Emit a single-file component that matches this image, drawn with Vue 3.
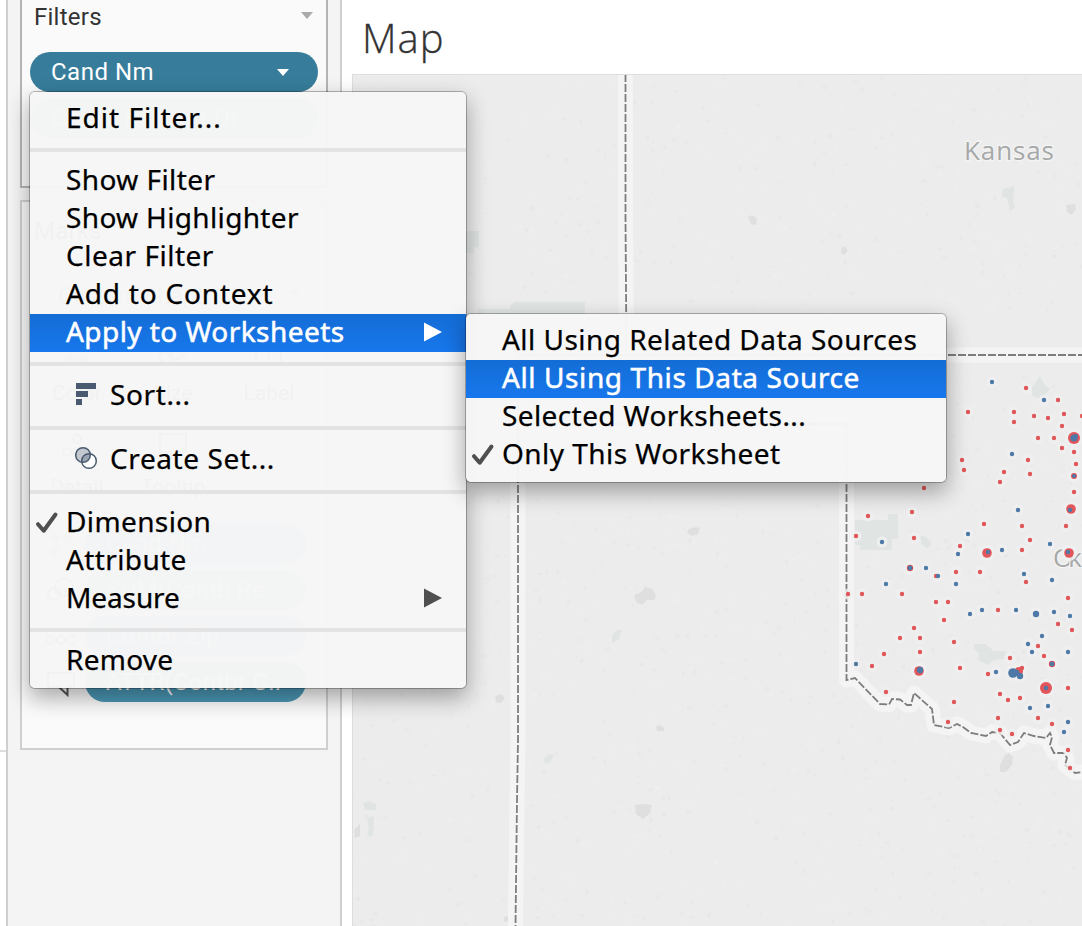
<script setup>
// t: label, s: tracking in px
const menu = [
  { t: 'Edit Filter...', s: 1 },
  null,
  { t: 'Show Filter', s: 0.42 },
  { t: 'Show Highlighter', s: 0.35 },
  { t: 'Clear Filter', s: 0.52 },
  { t: 'Add to Context', s: 0.8 },
  { t: 'Apply to Worksheets', s: 0.44, active: true, arrow: true },
  null,
  { t: 'Sort...', s: 0.6, icon: 'sort' },
  null,
  { t: 'Create Set...', s: 0.6, icon: 'set' },
  null,
  { t: 'Dimension', s: 0.38, check: true },
  { t: 'Attribute', s: 0.38 },
  { t: 'Measure', s: -0.1, arrow: true },
  null,
  { t: 'Remove', s: 0.25 },
]
const submenu = [
  { t: 'All Using Related Data Sources', s: 0.46 },
  { t: 'All Using This Data Source', s: 0.6, active: true },
  { t: 'Selected Worksheets...', s: 0.4 },
  { t: 'Only This Worksheet', s: 0.45, check: true },
]

// x, y and an optional radius for each mark
const red = [
  [1026,388],[1058,400],[968,412],[1014,412],[1014,422],[1034,416],[1048,418],[1064,414],[1082,416],[1062,426],
  [1038,438],[1054,438],[1074,438,6],[1062,448],[1074,452],[1076,464],[1074,476,3],[1074,492],[1028,460],[1030,474],
  [1004,472],[1000,482],[962,460],[964,470],[924,488],[868,516],[912,512],[856,536],[914,538],[984,524],[960,546],
  [987,553,4.8],[1022,526],[1030,540],[1022,550],[1066,526],[1071,509,4.8],[1069,553,4.8],[910,568,3.2],[936,576],
  [956,572],[980,572],[1026,582],[848,594],[862,594],[902,594],[936,602],[948,602],[944,620],[998,610],[1068,598],
  [1058,624],[1072,630],[914,628],[900,638],[920,638],[884,654],[872,666],[920,652],[954,642],[919,671,4.8],
  [960,668],[886,692],[954,702],[948,722],[988,674],[1010,658],[1019,671,4],[1022,668],[1038,646],[1044,656],
  [1052,664,3.2],[1046,688,6],[1068,688],[1000,694],[1008,700],[1020,698],[998,718],[1038,718],[1052,724],
  [1000,730],[1012,734],[1068,750],[1070,768],
]
const blue = [
  [992,382],[1044,400],[1074,438,3.6],[1076,436,2],[1074,476,2],[1012,454],[882,542],[968,534],[958,554],[988,552],[1002,550],
  [1018,510],[1050,544],[1070,510],[1068,552],[910,568,2.4],[926,568],[938,576],[956,584],[1024,574],[1052,580],
  [886,584],[970,614],[982,610],[1016,610],[1036,614,3.2],[1054,612],[1070,616],[1042,636],[856,664],[920,670,3.2],
  [996,672],[1013,673,4.8],[1017,672],[1020,676,3.2],[1028,644],[1032,652],[1052,664,2.4],[1068,652],[1046,688],
  [1048,706],[1030,708],[1068,722],[1064,732],
]

// faint terrain texture
const specks = []
let seed = 7
const rnd = () => (seed = (seed * 16807) % 2147483647) / 2147483647
for (let i = 0; i < 1500; i++) {
  specks.push([352 + rnd() * 730, 76 + rnd() * 850, 1.5 + rnd() * 3, 1.5 + rnd() * 3, rnd() > 0.4 ? '#e6e6e6' : '#f0f0f0'])
}

const borders = [
  'M625.5 74V220L626.5 355M518 355H1082M518 355V740L517 800L515.5 926',
  'M518 424H846.5',
  'M846.5 424V680L855 678L880 704L889 704.500L892 699L900 699.500L907 705L911 705L914 693L932 709L934 725L949 728L957 724L963 727L971 733L986 736L992 732L1000 733L1010 745L1018 742L1024 733L1034 736L1046 738L1050 733L1052 737L1050 745L1054 753L1064 753L1067 758L1065 765L1075 773L1084 772',
]
</script>

<template>
  <div class="screen">
    <aside class="gutter"></aside>
    <section class="shelf">
      <div class="card filters">
        <header class="cardhead"><span>Filters</span><i class="caret"></i></header>
        <div class="pill"><span>Cand Nm</span><i class="caret light"></i></div>
        <div class="pill green"><span>Contb Receipt Dt</span></div>
      </div>
      <div class="card marks">
        <header class="cardhead"><span>Marks</span></header>
        <div class="picker"><span>Custom Shape</span><i class="caret"></i></div>
        <div class="buttons">
          <div><svg width="30" height="28"><circle cx="9" cy="8" r="6"/><circle cx="21" cy="8" r="6"/><circle cx="9" cy="21" r="6"/><circle cx="21" cy="21" r="6"/></svg>Color</div>
          <div><svg width="30" height="28" class="line"><circle cx="18" cy="12" r="9"/><circle cx="8" cy="19" r="6"/></svg>Size</div>
          <div><svg width="30" height="28" class="line"><rect x="2" y="2" width="25" height="24"/><path d="M9 8H20M14.500 8V21"/></svg>Label</div>
          <div><svg width="30" height="28" class="line"><circle cx="15" cy="7" r="4"/><circle cx="5" cy="20" r="4"/><circle cx="15" cy="20" r="4"/><circle cx="25" cy="20" r="4"/></svg>Detail</div>
          <div><svg width="30" height="28" class="line"><path d="M2 2H28V20H17L13 26V20H2Z"/></svg>Tooltip</div>
        </div>
        <div class="encodings">
          <div class="enc"><svg width="30" height="30"><circle cx="9" cy="9" r="5"/><circle cx="21" cy="9" r="5"/><circle cx="9" cy="21" r="5"/></svg><b class="pill blue"><span>Cand Nm</span></b></div>
          <div class="enc"><svg width="30" height="30" class="line"><circle cx="18" cy="12" r="9"/><circle cx="8" cy="19" r="6"/></svg><b class="pill green"><span>SUM(Contb Re..</span></b></div>
          <div class="enc"><svg width="30" height="30" class="line"><circle cx="4" cy="19" r="4"/><circle cx="15" cy="19" r="4"/><circle cx="26" cy="19" r="4"/></svg><b class="pill blue"><span>Contbr Zip</span></b></div>
          <div class="enc"><svg width="30" height="34" class="line"><path d="M2 8H28V22H21.500V30L13 22H2Z"/></svg><b class="pill attr"><span>ATTR(Contbr C..</span></b></div>
        </div>
      </div>
    </section>

    <main class="view">
      <h1>Map</h1>
      <div class="map">
        <svg class="canvas" width="730" height="852" viewBox="352 74 730 852">
          <rect x="352" y="74" width="730" height="852" fill="#ececec" />
          <rect v-for="(s, i) in specks" :key="'s' + i" :x="s[0]" :y="s[1]" :width="s[2]" :height="s[3]" :fill="s[4]" opacity=".6" rx="1" />
          <g fill="#e0e5e3">
            <path d="M466 231H479V247L474 248V253H466ZM511 305L514 302H585V314H478V309H509Z" />
            <path d="M1003 189L1014 186V193L1013 199L1015 208L1010 211L1007 198L1002 197Z" />
            <path d="M855 520H888V514H898V539H892V550H860V545H855ZM920 535L926 537L932 543L927 549L922 544Z" />
            <path d="M1040 376L1045 385L1050 389L1045 395L1039 399L1032 395V387Z" />
            <path d="M974 644H985L994 651H1006L1004 659L994 660L988 665L978 660L979 653L974 650Z" />
            <path d="M612 635L617 630H622L618 640L612 643ZM544 758L549 754L554 755L550 762L545 764ZM363 803L369 801L376 804V810H365ZM367 818L374 816V828L372 837L367 836L369 828ZM510 743L516 740V745Z" />
          </g>
          <g fill="#dfdfdf">
            <path d="M634 595L641 592L646 587L652 589L656 595L654 600L647 600L642 605L636 602ZM635 805L642 804L652 805L650 813L643 819L636 814ZM688 530L692 527.500H700L698 534L692 536L687 533ZM495 696L501 694L505 698L501 703L496 702ZM656 726L660 725L664 728V731H657ZM354 830L360 824V836L355 838ZM748 217L752 215L757 219L756 225L751 224ZM841 249L844 246L848 250L845 255L841 253ZM1066 205L1075 204L1076 210L1071 215L1067 212ZM1009 753L1013 757L1012 765L1006 772L1000 772V765L1005 755ZM504 917L508 916V921L504 922Z" />
          </g>
          <g fill="none" stroke="#f4f4f4" stroke-width="15" stroke-linejoin="round" stroke-linecap="round">
            <path v-for="b in borders" :key="b" :d="b" />
          </g>
          <g fill="none" stroke="#7d7d7d" stroke-width="1.8" stroke-dasharray="8 2">
            <path v-for="b in borders" :key="b" :d="b" />
          </g>
          <text x="964" y="160" class="place" textLength="90">Kansas</text>
          <text x="1053" y="567" class="place dark" textLength="29">Ok</text>
          <circle v-for="(p, i) in red.concat(blue)" :key="'h' + i" :cx="p[0]" :cy="p[1]" :r="(p[2] || 2) + 3.5" fill="#f0f0f0" opacity=".8" />
          <circle v-for="(p, i) in red" :key="'r' + i" :cx="p[0]" :cy="p[1]" :r="p[2] || 2.2" fill="#e25659" />
          <circle v-for="(p, i) in blue" :key="'b' + i" :cx="p[0]" :cy="p[1]" :r="p[2] || 2.2" fill="#4e79a7" />
        </svg>
      </div>
    </main>

    <nav v-for="(items, k) in [menu, submenu]" :key="k" class="menu" :class="k ? 'sub' : 'root'">
      <template v-for="(m, i) in items" :key="i">
        <hr v-if="!m" />
        <div v-else class="item" :class="{ active: m.active, iconic: m.icon }">
          <svg v-if="m.check" class="check" width="24" height="24" viewBox="0 0 24 24"><path d="M3 13.200L8.700 19.700L20.500 3.500" fill="none" stroke="#4f4f4f" stroke-width="4" stroke-linecap="round" stroke-linejoin="round" /></svg>
          <svg v-if="m.icon === 'sort'" class="icon" width="24" height="24" viewBox="0 0 24 24"><path d="M1 1H21V7H1ZM1 9H13V15H1ZM1 17H7V23H1Z" fill="#4a5a70" /></svg>
          <svg v-if="m.icon === 'set'" class="icon" width="24" height="24" viewBox="0 0 24 24"><circle cx="14" cy="15" r="7.300" fill="#fff" /><circle cx="8" cy="9" r="7.300" fill="#c3c8cf" /><path d="M6.770 16.200A7.300 7.300 0 0 1 15.200 7.770A7.300 7.300 0 0 1 6.770 16.200Z" fill="#9ba5b2" /><g fill="none" stroke="#4a5a70" stroke-width="1.500"><circle cx="8" cy="9" r="7.300" /><circle cx="14" cy="15" r="7.300" /></g></svg>
          <span :style="{ letterSpacing: m.s + 'px' }">{{ m.t }}</span>
          <svg v-if="m.arrow" class="arrow" width="18" height="20"><path d="M0 0.500L18 10L0 19.500Z" /></svg>
        </div>
      </template>
    </nav>
  </div>
</template>

<style>
html, body { overflow: hidden; }
</style>

<style scoped>
* { box-sizing: border-box; }
.screen { position: relative; display: flex; width: 1082px; height: 926px; overflow: hidden; background: #fff; font-family: "Open Sans", sans-serif; }
.gutter { width: 6px; height: 752px; border-bottom: 2px solid #ddd; }
.shelf { width: 336px; height: 926px; background: #f4f4f4; border-left: 2px solid #cfcfcf; border-right: 2px solid #cfcfcf; padding: 0 12px; }
.card { width: 308px; border: 2px solid #cfcfcf; background: #fafafa; }
.filters { height: 188px; border-top: 0; border-color: #b4b4b4; padding: 0 8px; }
.marks { height: 550px; margin-top: 12px; padding: 0 8px; }
.cardhead { display: flex; justify-content: space-between; height: 52px; padding: 0 5px 0 4px; font: 24px/35px Roboto, sans-serif; color: #333; letter-spacing: .25px; }
.caret { width: 0; height: 0; border: 6.500px solid transparent; border-top: 7px solid #aaa; border-bottom: 0; margin-top: 12px; }
.caret.light { border-top-color: #fff; border-left-width: 6px; border-right-width: 6px; margin: 1px 0 0; }
.pill { display: flex; align-items: center; justify-content: space-between; width: 288px; height: 40px; border-radius: 20px; background: #377d9b; color: #fff; padding: 0 29px 1px 21px; font: 24px/38px Roboto, sans-serif; letter-spacing: .5px; white-space: nowrap; }
.filters .pill { margin-bottom: 6px; }
.pill.green { background: #8fc4b0; }
.pill.blue { background: #8fb0d4; }
.marks .cardhead { height: 70px; padding-top: 12px; }
.picker { display: flex; justify-content: space-between; height: 42px; width: 276px; border: 1px solid #ccc; margin: 5px 0 11px 5px; padding: 0 10px 0 22px; font: 23px/38px Roboto, sans-serif; color: #777; }
.buttons { display: grid; grid-template-columns: repeat(3, 86px); gap: 10px; margin-left: 4px; }
.buttons div { display: flex; flex-direction: column; align-items: center; justify-content: space-around; height: 84px; border: 1px solid #ddd; font: 21px/26px Roboto, sans-serif; color: #444; }
.line { fill: none; stroke: #555; stroke-width: 2; }
.buttons svg:not(.line), .enc svg:not(.line) { fill: #aaa; }
.encodings { display: flex; flex-direction: column; gap: 6px; margin-top: 16px; }
.enc { display: flex; gap: 9px; align-items: center; height: 40px; padding-left: 16px; }
.enc .pill { width: 221px; font-weight: 400; letter-spacing: .2px; }
.enc .attr { background: #4a96b4; }
.view { flex: 1; display: flex; flex-direction: column; padding-left: 10px; }
h1 { margin: 0; height: 74px; padding-left: 10px; font: 300 40px/76px "Open Sans", sans-serif; color: #333; letter-spacing: 1px; -webkit-text-stroke: .3px #333; }
.map { height: 852px; border-left: 1px solid #ddd; border-top: 1px solid #ddd; overflow: hidden; }
.canvas { display: block; margin: -1px 0 0 -1px; }
.place { font: 500 26px "Open Sans", sans-serif; fill: #a6a9a8; stroke: #f4f4f4; stroke-width: 2.500px; paint-order: stroke; }
.menu { position: absolute; padding: 8px 0; background: rgba(246, 246, 246, .978); border-radius: 5px; box-shadow: 0 0 0 1px rgba(0, 0, 0, .27), 0 9px 22px 1px rgba(0, 0, 0, .33); font-family: "Noto Sans", sans-serif; font-size: 28px; color: #000; }
.root { left: 30px; top: 92px; width: 436px; height: 596px; }
.sub { left: 466px; top: 314px; width: 480px; height: 168px; }
.menu hr { border: 0; height: 4px; margin: 10px 0; background: #e3e3e3; }
.item { position: relative; display: flex; align-items: center; height: 38px; padding: 0 24px 0 36px; line-height: 36px; white-space: pre; -webkit-text-stroke: .25px #000; }
.item span { flex: 1; margin-top: -4px; }
.item.active { color: #fff; background: linear-gradient(#146dd6, #1777ec); -webkit-text-stroke: .5px #fff; }
.item.iconic { height: 40px; padding-left: 45px; }
.icon { margin: -4px 11px 0 0; }
.check { position: absolute; left: 5px; top: 7px; }
.arrow { fill: #4f4f4f; margin-top: -2px; stroke: none; }
.active .arrow { fill: #fff; }
</style>
